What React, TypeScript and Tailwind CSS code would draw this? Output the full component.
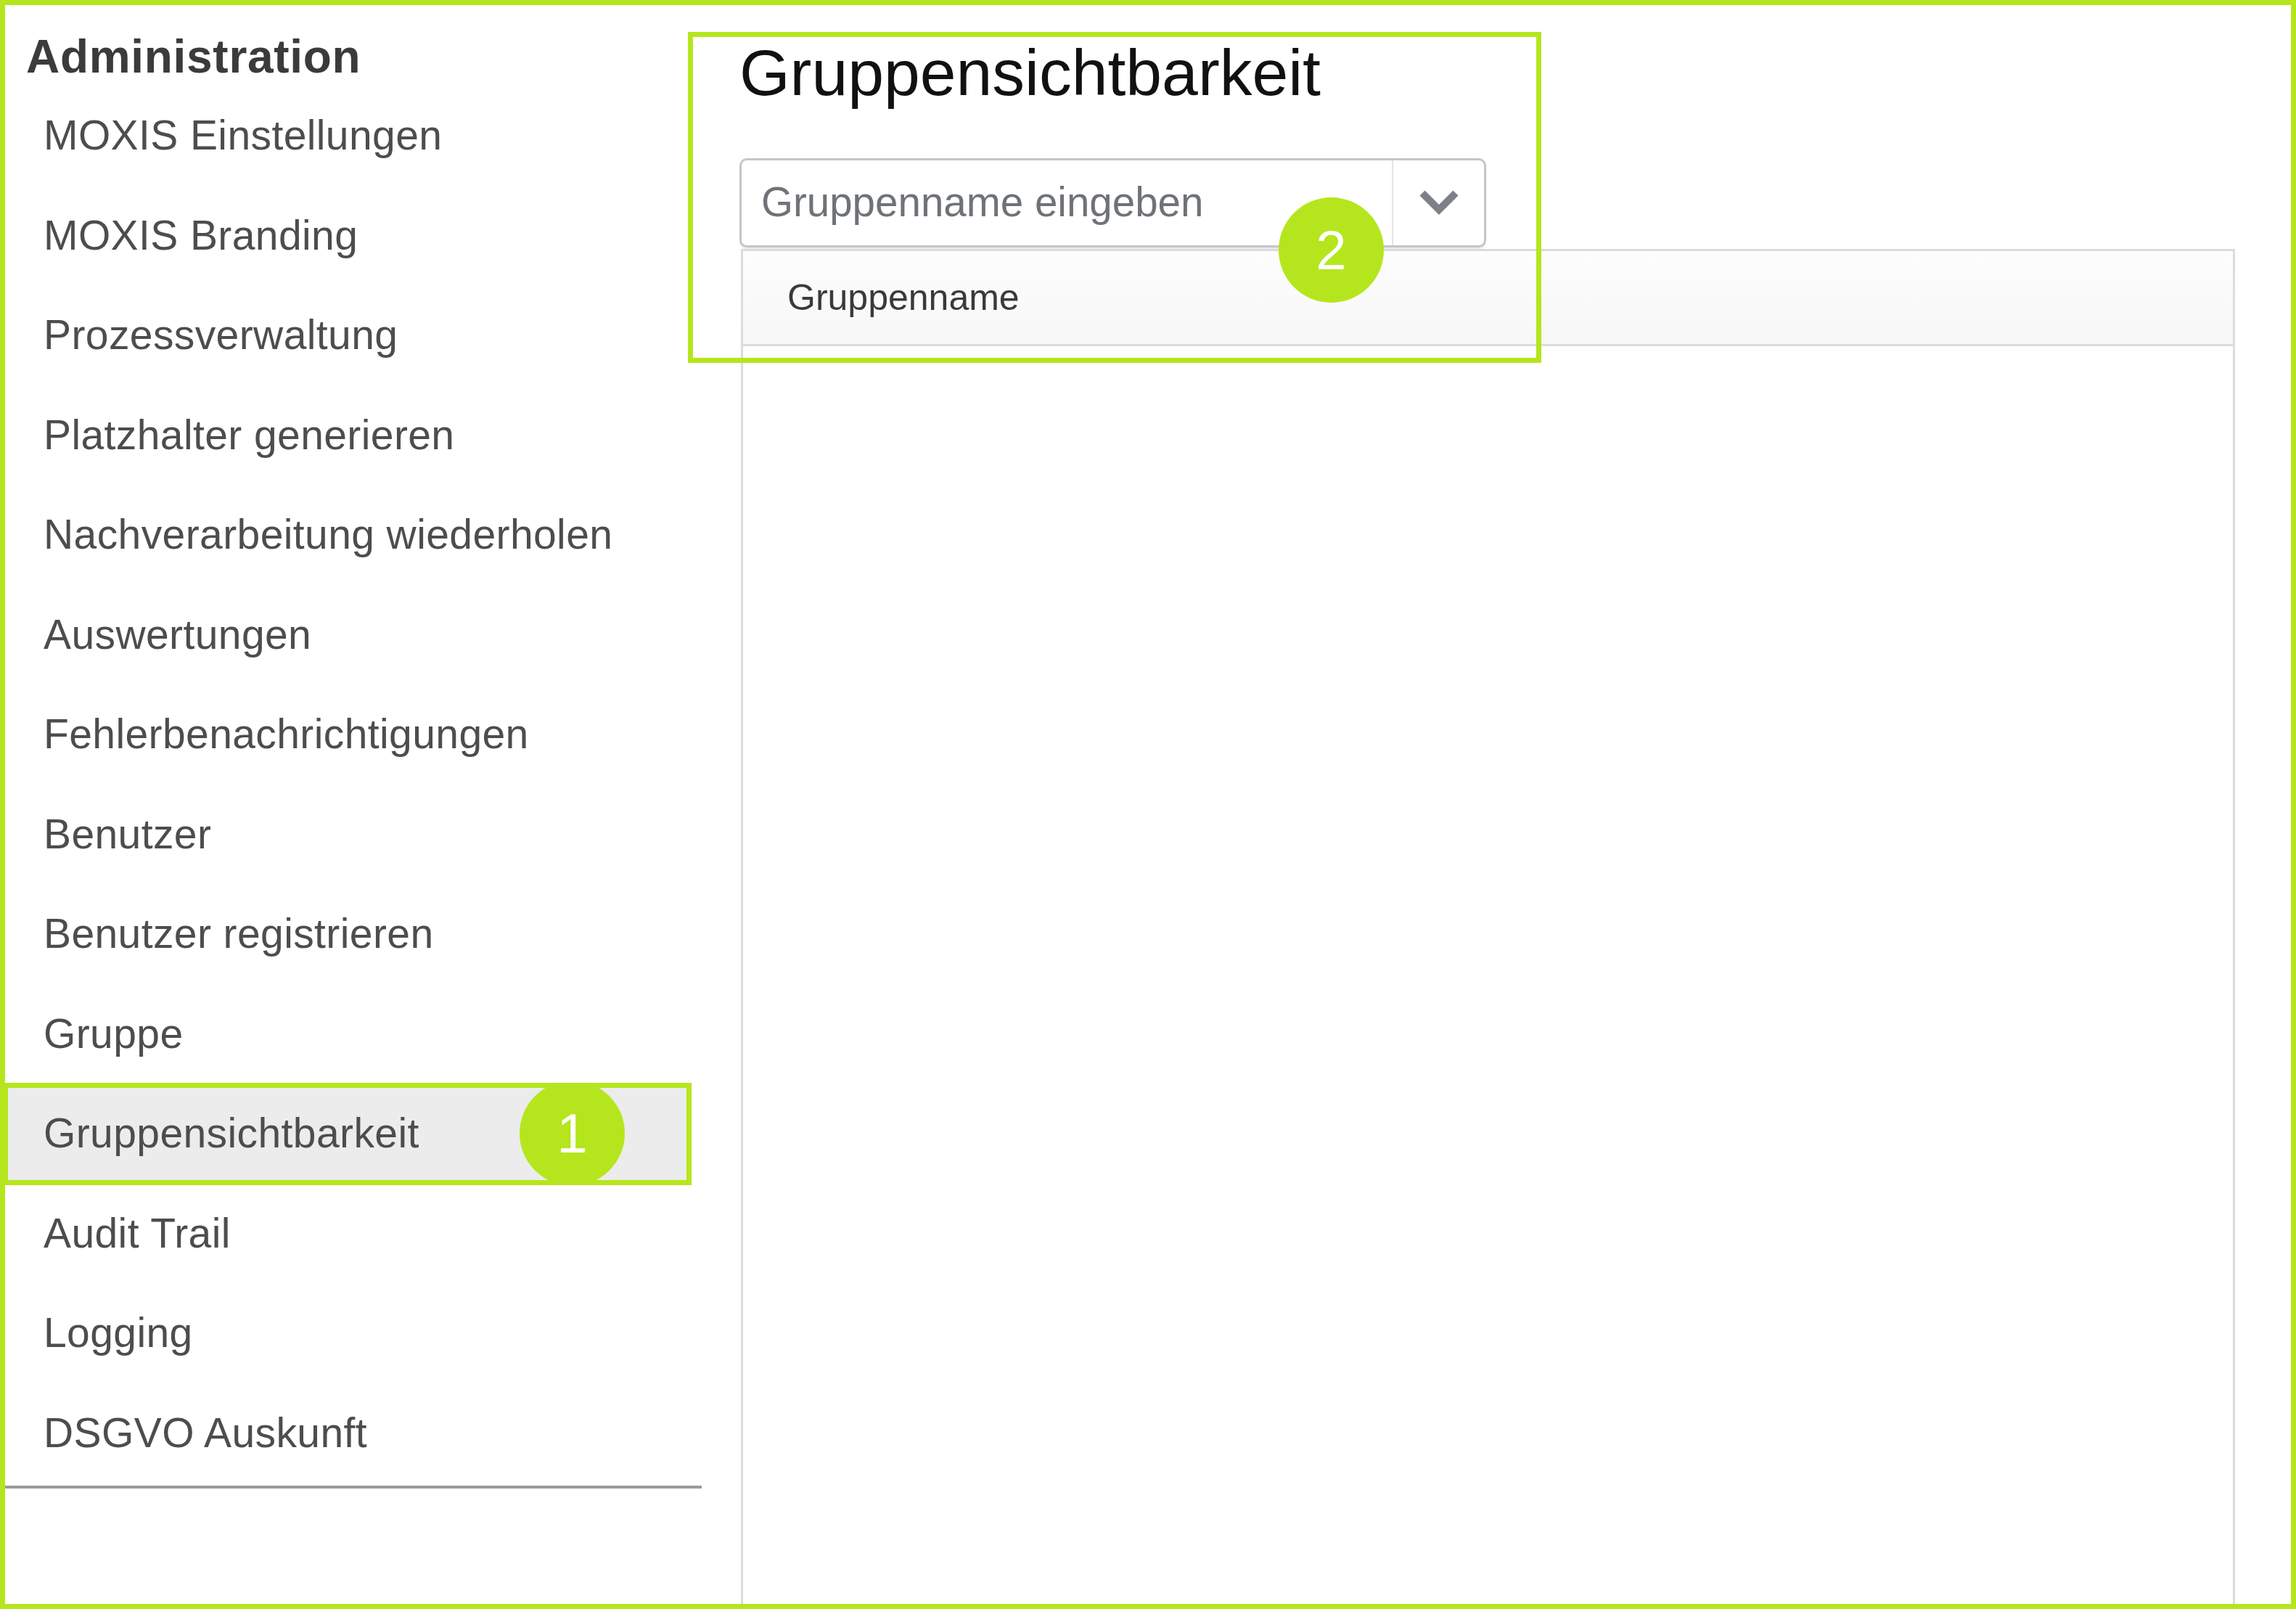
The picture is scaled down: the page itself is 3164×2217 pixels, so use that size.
const navItems = [
  "MOXIS Einstellungen",
  "MOXIS Branding",
  "Prozessverwaltung",
  "Platzhalter generieren",
  "Nachverarbeitung wiederholen",
  "Auswertungen",
  "Fehlerbenachrichtigungen",
  "Benutzer",
  "Benutzer registrieren",
  "Gruppe",
  "Gruppensichtbarkeit",
  "Audit Trail",
  "Logging",
  "DSGVO Auskunft",
];

function Badge({ n }: { n: string }) {
  return (
    <div className="w-[145px] h-[145px] rounded-full bg-[#b5e61d] flex items-center justify-center text-white text-[76px] leading-none">
      {n}
    </div>
  );
}

export default function App() {
  return (
    <div className="relative w-[3164px] h-[2217px] overflow-hidden bg-white border-[7px] border-[#b5e61d] flex font-['Liberation_Sans',Arial,sans-serif]">
      {/* Sidebar */}
      <aside className="w-[960px] shrink-0 flex flex-col pt-[39px]">
        <h2 className="pl-[29px] text-[64px] leading-none font-bold tracking-[0.7px] text-[#3b3b3b]">Administration</h2>
        <ul className="mt-[8px] w-[946px]">
          {navItems.map((item) => (
            <li
              key={item}
              className={
                item === "Gruppensichtbarkeit"
                  ? "h-[137.5px] flex items-center pl-[53px] text-[57px] leading-none tracking-[0.4px] text-[#4d4d4d] bg-[#ececec]"
                  : "h-[137.5px] flex items-center pl-[53px] text-[57px] leading-none tracking-[0.4px] text-[#4d4d4d]"
              }
            >
              {item}
            </li>
          ))}
        </ul>
        <div className="mt-[4px] w-[960px] border-t-4 border-[#9b9b9b]" />
      </aside>

      {/* Main */}
      <main className="flex-1 flex flex-col pl-[52px] pr-[77px] pt-[49px]">
        <h1 className="text-[89.5px] leading-none text-[#111111]">Gruppensichtbarkeit</h1>
        <div className="mt-[72px] w-[1029px] h-[123px] flex border-[3px] border-[#c6c6c6] rounded-[10px] shadow-[0_2px_2px_rgba(0,0,0,0.1)]">
          <div className="flex-1 flex items-center pl-[27px] text-[56.5px] leading-none text-[#6f7378]">
            Gruppenname eingeben
          </div>
          <div className="w-[127px] border-l-2 border-[#e4e4e4] flex items-center justify-center">
            <svg width="56" height="36" viewBox="0 0 56 36">
              <polyline points="5,5 28,28 51,5" fill="none" stroke="#7d8088" strokeWidth="10" />
            </svg>
          </div>
        </div>
        <div className="mt-[2px] ml-[2px] flex-1 border-x-[3px] border-t-[3px] border-[#dcdcdc]">
          <div className="h-[131px] flex items-center pl-[61px] bg-gradient-to-b from-[#fdfdfd] to-[#f7f7f7] border-b-[3px] border-[#dcdcdc] text-[50px] leading-none font-medium text-[#3a3a3a]">
            Gruppenname
          </div>
        </div>
      </main>

      {/* Annotation overlays */}
      <div className="absolute left-[-3px] top-[1485px] w-[949px] h-[141px] border-[7px] border-[#b5e61d] overflow-hidden">
        <div className="absolute left-[705px] top-[-10px]">
          <Badge n="1" />
        </div>
      </div>
      <div className="absolute left-[941px] top-[37px] w-[1176px] h-[456px] border-[7px] border-[#b5e61d]" />
      <div className="absolute left-[1755px] top-[265px]">
        <Badge n="2" />
      </div>
    </div>
  );
}
